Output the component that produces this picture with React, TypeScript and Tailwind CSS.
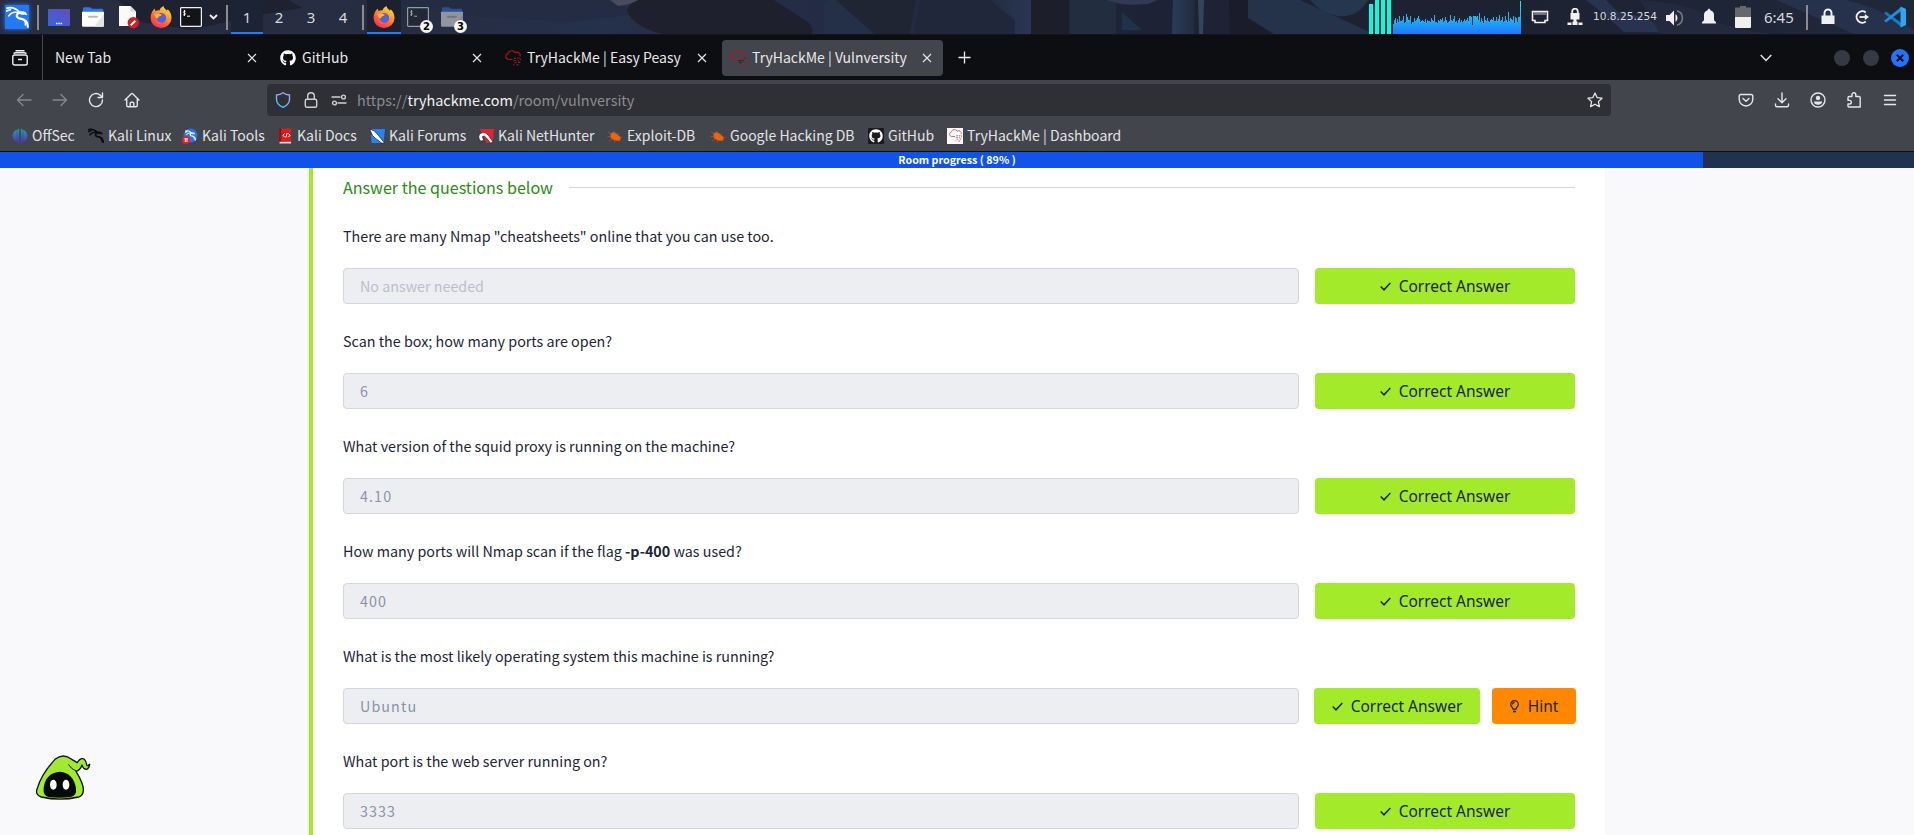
import React from "react";
import { FaGithub } from "react-icons/fa";

const UI = "font-['Noto_Sans_CJK_SC','Noto_Sans',sans-serif]";

function Firefox() {
  return (
    <svg width="22" height="22" viewBox="0 0 22 22">
      <defs>
        <linearGradient id="ff" x1="0.85" y1="0" x2="0.25" y2="1">
          <stop offset="0" stopColor="#ffe34c" />
          <stop offset="0.4" stopColor="#ff9a30" />
          <stop offset="0.7" stopColor="#ff5a35" />
          <stop offset="1" stopColor="#ee2f62" />
        </linearGradient>
      </defs>
      <path d="M2 6Q3 4 4.500 2.500L5.500 5Q8 4 9.300 4.500 10 1.500 13.500 0 13.500 2.500 17 4.800L17.600 3.200Q21.800 7 21.500 12.500A10.400 9.600 0 0 1 .6 12Q.6 8.500 2 6z" fill="url(#ff)" />
      <circle cx="11.200" cy="12" r="4.900" fill="#5560dc" />
      <path d="M4 8Q8 6.600 12 8.800 10.500 10.400 8.600 10.500 8.600 12.600 6.500 12.500z" fill="#ffb63a" />
      <path d="M6.300 12.300Q7.500 17.500 12.500 16.800 10.500 18.600 7.500 17.200 5 15 6.300 12.300z" fill="#ff6a38" />
    </svg>
  );
}

function Dragon({ size, color, x, y, w = 1.9 }: { size: number; color: string; x?: number; y?: number; w?: number }) {
  return (
    <svg x={x} y={y} width={size} height={size} viewBox="0 0 24 24" fill="none" stroke={color} strokeWidth={w} strokeLinecap="round" strokeLinejoin="round">
      <path d="M1 2.200C6 .8 11 3 14.500 6.800M.8 5.200l3.700-1.300M3 10.200C6 6 11 6 14.500 7.500" />
      <path d="M14.500 6.800C9.500 9 10.500 12.800 16 13.400c4.500.6 6.500 3.300 6.800 8.200" strokeWidth={w * 1.200} />
      <path d="M17.500 13.800c2 1.500 3 3.800 2.600 6.200" strokeWidth={w * 0.700} />
      <path d="M14 6.500l3-.8 3.400 1.100 1.200 2.400-2.200-.7-3 .2z" fill={color} strokeWidth={w * 0.500} />
    </svg>
  );
}

function Cloud({ size, color, bits, w = 1.1 }: { size: number; color: string; bits: string; w?: number }) {
  return (
    <svg width={size} height={size} viewBox="0 0 16 16" fill="none">
      <path d="M7.500 9.300H3.300A2.900 2.900 0 0 1 3 3.600 4 4 0 0 1 10.300 2.700 3.200 3.200 0 0 1 15 6.400" stroke={color} strokeWidth={w} />
      <path d="M9 8.300h2M12.200 8.300h1.300M14.700 9.500H16M13 12.300h2.300M8 14.800h1M11.500 14.800h2" stroke={color} strokeWidth="1.200" />
      <path d="M8.300 10.600h3M12.300 10.600h1.500M9.300 12.600h2.300M14.300 8h1.200" stroke={bits} strokeWidth="1.200" />
    </svg>
  );
}

function Terminal({ dim }: { dim?: boolean }) {
  return (
    <svg width="22" height="20" viewBox="0 0 22 20" opacity={dim ? 0.55 : 1}>
      <rect x=".6" y=".6" width="20.800" height="18.800" rx=".8" fill={dim ? "#22242b" : "#131418"} stroke="#f1f1f1" strokeWidth="1.200" />
      <path d="M5.500 4.200c-2-.6-2.400 1.600-1 1.900 1.500.3 1.200 2.200-1.200 1.700M4.400 3v6M7 9.200h3" stroke="#fff" strokeWidth="1" fill="none" />
    </svg>
  );
}

function Folder({ dim }: { dim?: boolean }) {
  return (
    <svg width="22" height="20" viewBox="0 0 22 20" opacity={dim ? 0.5 : 1}>
      <path d="M1 5V1.500A1.300 1.300 0 0 1 2.300.2H8l2 1.500h10.200a1 1 0 0 1 1 1V6H1z" fill="#2f74ea" />
      <path d="M0 4.800h22V18.500a1.300 1.300 0 0 1-1.300 1.300H1.300A1.300 1.300 0 0 1 0 18.500z" fill="#fcfcfc" />
      <path d="M22 7v11.500a1.300 1.300 0 0 1-1.300 1.300H12z" fill="#e4e4e4" />
      <rect x="6" y="8.700" width="10" height="2" rx="1" fill="#b9b9bd" />
    </svg>
  );
}

function Badge({ children }: { children: React.ReactNode }) {
  return (
    <span className="absolute -right-[4px] -bottom-[6px] flex h-[13px] w-[13px] items-center justify-center rounded-full bg-[#f4f4f0] font-['DejaVu_Sans'] text-[10px] leading-none font-bold text-black">
      {children}
    </span>
  );
}

const load = [
  10, 14, 16, 11, 15, 12, 18, 13, 13, 14, 18, 11, 12, 20, 17, 14, 14, 18, 10, 12, 12, 16, 13, 14, 16, 18, 15, 12, 13, 14, 13, 12,
  15, 11, 14, 13, 13, 12, 16, 14, 13, 19, 12, 12, 11, 14, 13, 15, 14, 16, 12, 13, 17, 14, 11, 12, 13, 19, 14, 13, 15, 18, 12, 13,
  11, 14, 16, 12, 14, 12, 13, 15, 13, 14, 16, 13, 18, 18, 17, 9, 18, 18, 18, 17, 18, 14, 21, 12, 16, 13, 11, 18, 14, 13, 16, 13,
  12, 14, 15, 14, 17, 13, 13, 17, 13, 15, 19, 13, 14, 17, 12, 13, 18, 14, 12, 22, 13, 16, 15, 14, 18, 11, 17, 16, 12, 17, 17, 33,
];

function CpuGraph() {
  return (
    <svg width="152" height="34" viewBox="0 0 152 34" className="shrink-0">
      <defs>
        <linearGradient id="cpu" gradientUnits="userSpaceOnUse" x1="0" y1="34" x2="0" y2="0">
          <stop offset="0" stopColor="#2674ff" />
          <stop offset="0.5" stopColor="#13bdf2" />
          <stop offset="1" stopColor="#00ffe0" />
        </linearGradient>
      </defs>
      <path d="M0 4h4v30H0zM6 0h4v34H6zM12 0h4v34h-4zM18 0h4v34h-4z" fill="#00ffe0" />
      {load.map((h, i) => (
        <rect key={i} x={24 + i} y={34 - h} width="1" height={h} fill="url(#cpu)" />
      ))}
    </svg>
  );
}

function Sep() {
  return <i className="h-[25px] w-[2px] shrink-0 bg-[#8b8c90]" />;
}

function Wallpaper() {
  return (
    <svg className="absolute inset-0" width="1914" height="34" viewBox="0 0 1914 34" preserveAspectRatio="none">
      <defs>
        <linearGradient id="wp">
          <stop offset="0" stopColor="#282c3f" />
          <stop offset=".2" stopColor="#262d42" />
          <stop offset=".31" stopColor="#25304a" />
          <stop offset=".5" stopColor="#222a41" />
          <stop offset=".6" stopColor="#1d2335" />
          <stop offset=".75" stopColor="#1d2131" />
          <stop offset="1" stopColor="#1f2839" />
        </linearGradient>
        <linearGradient id="wpa"><stop offset="0" stopColor="#222c40" /><stop offset="1" stopColor="#2a3654" /></linearGradient>
        <linearGradient id="wpb"><stop offset="0" stopColor="#2a3c57" /><stop offset="1" stopColor="#202b3f" /></linearGradient>
      </defs>
      <rect width="1914" height="34" fill="url(#wp)" />
      <path d="M118 0h170l14 8-50 8-60 14-50-8z" fill="#1e2130" />
      <path d="M380 0h240l10 14-60 8-100-6z" fill="#232c42" />
      <path d="M627 10q3-8 12-10h135l34 22q6 6 4 12h-150q-30-8-35-24z" fill="#1e212d" />
      <path d="M610 0h28q-8 5-20 6z" fill="#4a4b5e" />
      <path d="M824 34V6l6-6h30l20 34z" fill="#242f48" />
      <path d="M836 0h80l-6 34h-36z" fill="#202534" />
      <path d="M920 0h70l24 20v14h-100z" fill="#20273a" />
      <path d="M990 0h41v34h-16V20z" fill="url(#wpa)" />
      <path d="M1031 0h38v34h-38z" fill="#1c1e29" />
      <path d="M1070 0h46v34h-46z" fill="#232d40" />
      <path d="M1122 12l20 18h-20z" fill="#1c3348" />
      <path d="M1106 0h52l-10 4q-26 2-34-2z" fill="#303a52" />
      <path d="M1173 0h22l-1 34h-22z" fill="url(#wpb)" />
      <path d="M1198 0h6l-1 34h-4z" fill="#35435c" />
      <path d="M1229 0h19l4 20 20 14h-42z" fill="#1a1d29" />
      <path d="M1248 0h52l74 34h-100l-26-16z" fill="#243349" />
      <path d="M1310 0h58q-10 18-30 16-16-2-28-16z" fill="#25364f" />
      <path d="M1586 0h20l12 12 30 6 16 14h-40l-20-18z" fill="#28334f" />
      <path d="M1640 0q60 4 70 20 30 10 60 14h-110z" fill="#232a3d" />
      <path d="M1776 0h70q40 10 68 30v4h-60z" fill="#26324c" />
    </svg>
  );
}

function Taskbar() {
  const space = "flex h-[34px] w-[32px] items-center justify-center text-[15px]";
  return (
    <div className="relative h-[35px] overflow-hidden bg-[#14161d] font-['Noto_Sans',sans-serif] text-[#d8d9dd]">
      <Wallpaper />
      <div className="relative flex h-[34px] items-center">
        <span className="ml-[5px] flex h-6 w-6 items-center justify-center bg-[#2378f5] shadow-[0_0_5px_#2378f5]">
          <Dragon size={23} color="#fff" />
        </span>
        <div className="mr-[9px] ml-[8px] flex"><Sep /></div>
        <svg width="22" height="17" viewBox="0 0 22 17" className="mt-px">
          <defs><linearGradient id="dk" x1="0" y1="1" x2="1" y2="0"><stop offset="0" stopColor="#3a62dc" /><stop offset=".5" stopColor="#4a5bcd" /><stop offset="1" stopColor="#6b4bb0" /></linearGradient></defs>
          <rect width="22" height="17" rx=".7" fill="url(#dk)" />
          <path d="M8 14.500h1.500M10.300 14.500h1.500M12.600 14.500h1.500" stroke="#fff" strokeWidth="1.500" />
        </svg>
        <span className="ml-[12px]"><Folder /></span>
        <svg className="ml-[14px]" width="22" height="24" viewBox="0 0 22 24">
          <path d="M1 1h11.500L18 6.500V21H1z" fill="#fafafa" /><path d="M12.500 1v5.500H18z" fill="#d6d6d6" />
          <circle cx="15.300" cy="17.800" r="5.700" fill="#cf1f24" /><path d="M12.800 20.200l4.500-4.500" stroke="#fff" strokeWidth="2" />
        </svg>
        <span className="ml-[10px]"><Firefox /></span>
        <span className="ml-[8px]"><Terminal /></span>
        <svg className="ml-[7px]" width="9" height="6" viewBox="0 0 9 6"><path d="M1 1l3.500 3.500L8 1" stroke="#f1f1f1" strokeWidth="1.800" fill="none" /></svg>
        <div className="mr-[3px] ml-[8px] flex"><Sep /></div>
        <div className={space + " border-b-2 border-[#2777ff] bg-[#1c2335] pt-[2px]"}>1</div>
        <div className={space}>2</div>
        <div className={space}>3</div>
        <div className={space}>4</div>
        <div className="mr-[3px] ml-[3px] flex"><Sep /></div>
        <div className="flex h-[34px] w-[34px] items-center justify-center border-b-2 border-[#2777ff] bg-[#1c2130] pt-[2px]"><Firefox /></div>
        <span className="relative ml-[6px] flex"><Terminal dim /><Badge>2</Badge></span>
        <span className="relative ml-[12px] flex"><Folder dim /><Badge>3</Badge></span>
        <div className="ml-auto flex w-[545px] items-center">
          <CpuGraph />
          <svg className="ml-[10px]" width="18" height="16" viewBox="0 0 18 16"><path d="M1.500 2.500h15v9h-2.500v2H4v-2H1.500z" fill="none" stroke="#f0f0ee" strokeWidth="1.600" /><path d="M4 3v3M6 3v3M8 3v3M10 3v3M12 3v3M14 3v3" stroke="#f0f0ee" strokeWidth=".8" /></svg>
          <svg className="ml-[17px]" width="18" height="18" viewBox="0 0 18 18"><path d="M4.500 5h9v6.500h-9zM7.500 11h3v3h-3zM1.500 14.500h4V17h-4zM6.500 13.500h5V17h-5zM12.500 14.500h4V17h-4z" fill="#f0f0ee" /><path d="M6.200 6V3.500a2.800 2.800 0 0 1 5.600 0V6" fill="none" stroke="#f0f0ee" strokeWidth="1.800" /></svg>
          <span className="ml-[9px] w-[66px] -translate-y-px font-['DejaVu_Sans'] text-[10.6px] leading-none whitespace-nowrap">10.8.25.254</span>
          <svg className="ml-[6px] mt-px" width="19" height="18" viewBox="0 0 19 18"><path d="M1 6h3.500L9 1.500v15L4.500 12H1z" fill="#f0f0ee" /><path d="M10.500 5a5 5 0 0 1 0 8z" fill="#f0f0ee" /><path d="M12 1.800a7.500 7.500 0 0 1 0 14.400" fill="none" stroke="#77797f" strokeWidth="1.600" /></svg>
          <svg className="ml-[17px]" width="16" height="18" viewBox="0 0 16 18"><path d="M1 15.500v-1.300l2-2V7a5 5 0 0 1 3.700-4.800c0-2 2.600-2 2.600 0A5 5 0 0 1 13 7v5.200l2 2v1.300z" fill="#f0f0ee" /></svg>
          <svg className="ml-[18px]" width="16" height="22" viewBox="0 0 16 22"><path d="M5 0h6v1.500h5V11H0V1.500h5z" fill="#66686c" /><path d="M0 11h16v10a1 1 0 0 1-1 1H1a1 1 0 0 1-1-1z" fill="#f0f0ee" /></svg>
          <span className="ml-[13px] w-[42px] text-[15px] whitespace-nowrap">6:45</span>
          <Sep />
          <svg className="ml-[13px]" width="14" height="18" viewBox="0 0 14 18"><path d="M.5 7.500h13V16H.5z" fill="#f0f0ee" /><path d="M3.500 8V5a3.500 3.500 0 0 1 7 0v3" fill="none" stroke="#f0f0ee" strokeWidth="2" /></svg>
          <svg className="ml-[19px]" width="16" height="16" viewBox="0 0 16 16"><path d="M11.800 3.500A5.700 5.700 0 1 0 11.800 12.500" fill="none" stroke="#f0f0ee" strokeWidth="2" /><path d="M5.500 8h6" stroke="#f0f0ee" strokeWidth="1.800" /><path d="M10.800 5l4.200 3-4.200 3z" fill="#f0f0ee" /></svg>
          <svg className="ml-[14px]" width="22" height="22" viewBox="0 0 22 22"><path d="M0 7.200L2 5.600 17 16.800v4z" fill="#0b7fc9" /><path d="M0 14.800l2 1.600L17 5.200v-4z" fill="#1c8ede" /><path d="M16.500.6L22 3v16l-5.500 2.500z" fill="#2aa9f2" /></svg>
        </div>
      </div>
    </div>
  );
}

function Close() {
  return <svg width="10" height="10" viewBox="0 0 10 10"><path d="M1 1l8 8M9 1L1 9" stroke="#e3e4e6" strokeWidth="1.200" /></svg>;
}

function Tab({ icon, title, active }: { icon?: React.ReactNode; title: string; active?: boolean }) {
  return (
    <div className={"mr-[4px] flex h-9 w-[221px] items-center rounded-[4px] pl-[8px] pr-[11px] " + (active ? "bg-[#42454c]" : "")}>
      {icon && <span className="mr-[6px] flex w-4">{icon}</span>}
      <span className="flex-1 pb-px text-[14px] leading-5 whitespace-nowrap">{title}</span>
      <Close />
    </div>
  );
}

function TabStrip() {
  return (
    <div className="flex h-[45px] items-center bg-[#0d0e12] text-[#e8e8e8]">
      <div className="flex h-full w-[43px] items-center border-r border-[#45474d] pl-[12px]">
        <svg width="16" height="16" viewBox="0 0 16 16" fill="none" stroke="#f0f0f2" strokeWidth="1.400"><rect x=".8" y="5" width="14.400" height="10" rx="1.800" /><path d="M1.500 3.600Q2.500 2.700 4 2.700h8q1.500 0 2.500.9M3.500 .8h9M6 9.500h4" /></svg>
      </div>
      <div className="ml-[4px] flex">
        <Tab title="New Tab" />
        <Tab title="GitHub" icon={<FaGithub size={16} color="#fff" />} />
        <Tab title="TryHackMe | Easy Peasy" icon={<Cloud size={16} color="#b3171c" bits="#4c2a2e" />} />
        <Tab title="TryHackMe | Vulnversity" active icon={<Cloud size={16} color="#b3171c" bits="#23252c" />} />
      </div>
      <svg className="ml-[11px]" width="13" height="13" viewBox="0 0 13 13"><path d="M6.500.5v12M.5 6.500h12" stroke="#f0f0f0" strokeWidth="1.300" /></svg>
      <div className="ml-auto flex items-center">
        <svg className="mr-[62px]" width="12" height="8" viewBox="0 0 12 8"><path d="M.7 1L6 6.500 11.300 1" stroke="#e8e8ea" strokeWidth="1.400" fill="none" /></svg>
        <i className="mr-[13px] h-4 w-4 rounded-full bg-[#353944]" />
        <i className="mr-[12px] h-4 w-4 rounded-full bg-[#353944]" />
        <svg className="mr-[5px]" width="18" height="18" viewBox="0 0 18 18"><circle cx="9" cy="9" r="9" fill="#2474fb" /><path d="M5.800 5.800l6.400 6.400M12.200 5.800l-6.400 6.400" stroke="#0d1220" strokeWidth="2.200" /></svg>
      </div>
    </div>
  );
}

function Toolbar() {
  const s = { fill: "none", stroke: "#e6e6e8", strokeWidth: 1.4, strokeLinecap: "round", strokeLinejoin: "round" } as const;
  return (
    <div className="flex h-10 items-center">
      <svg className="ml-[16px]" width="16" height="16" viewBox="0 0 16 16" {...s} stroke="#85878b"><path d="M15 8H1.500M7 2.500L1.500 8 7 13.500" /></svg>
      <svg className="ml-[20px]" width="16" height="16" viewBox="0 0 16 16" {...s} stroke="#85878b"><path d="M1 8h13.500M9 2.500L14.500 8 9 13.500" /></svg>
      <svg className="ml-[20px]" width="16" height="16" viewBox="0 0 16 16" {...s}><path d="M14.500 8A6.500 6.500 0 1 1 12.300 3.200L14 5M14.500 1v4.500H10" /></svg>
      <svg className="ml-[20px]" width="16" height="16" viewBox="0 0 16 16" {...s}><path d="M1 8l6.300-6.300q.7-.6 1.400 0L15 8M2.700 7v6.500q0 1.300 1.300 1.300h8q1.300 0 1.300-1.300V7M6.200 14.500v-3.200q0-1.100 1.100-1.100h1.400q1.100 0 1.100 1.100v3.200" /></svg>
      <div className="ml-[127px] flex h-8 w-[1344px] items-center rounded-[4px] bg-[#2f3035]">
        <svg className="ml-[8px]" width="16" height="16" viewBox="0 0 16 16"><defs><linearGradient id="sh" x1="0" y1="1" x2="1" y2="0"><stop offset="0" stopColor="#39c9f5" /><stop offset="1" stopColor="#b09cf5" /></linearGradient></defs><path d="M8 .8C6 2.300 3.800 3 1.500 3v4.500c0 3.500 3.200 6.300 6.500 7.800 3.300-1.500 6.500-4.300 6.500-7.800V3C12.200 3 10 2.300 8 .8z" fill="none" stroke="url(#sh)" strokeWidth="1.400" /></svg>
        <svg className="ml-[12px]" width="16" height="16" viewBox="0 0 16 16" {...s} stroke="#cfd0d2"><rect x="2.300" y="7.300" width="11.400" height="8" rx="1.500" /><path d="M4.700 7V4a3.300 3.300 0 0 1 6.600 0v3" /></svg>
        <svg className="ml-[12px]" width="16" height="16" viewBox="0 0 16 16" {...s} stroke="#cfd0d2"><path d="M1 5h8M7 11h8" /><circle cx="12.500" cy="5" r="1.900" /><circle cx="3.500" cy="11" r="1.900" /></svg>
        <span className="ml-[10px] flex-1 text-[14.43px] leading-5 whitespace-nowrap text-[#8b8c90]">
          https://<b className="font-normal text-[#f0f0f0]">tryhackme.com</b>/room/vulnversity
        </span>
        <svg className="mr-[8px]" width="16" height="16" viewBox="0 0 16 16" {...s} strokeWidth="1.300"><path d="M8 1l2.100 4.600 4.900.6-3.600 3.400 1 5L8 12.200l-4.400 2.400 1-5L1 6.200l4.900-.6z" /></svg>
      </div>
      <svg className="ml-[127px]" width="16" height="16" viewBox="0 0 16 16" {...s}><path d="M3 2.500h10q1.800 0 1.800 1.800v3A6.800 6.800 0 0 1 8 14 6.800 6.800 0 0 1 1.200 7.300v-3Q1.200 2.500 3 2.500zM5 6.500l3 2.800 3-2.800" /></svg>
      <svg className="ml-[20px]" width="16" height="16" viewBox="0 0 16 16" {...s}><path d="M8 1v9.500M4 6.800l4 4 4-4M1.500 12v1.300q0 1.500 1.500 1.500h10q1.500 0 1.500-1.500V12" /></svg>
      <svg className="ml-[20px]" width="16" height="16" viewBox="0 0 16 16" {...s}><circle cx="8" cy="8" r="7" /><circle cx="8" cy="5.900" r="2.200" fill="#e6e6e8" stroke="none" /><path d="M3.800 9.500h8.400q-.5 3.300-4.200 3.300t-4.200-3.300z" fill="#e6e6e8" stroke="none" /></svg>
      <svg className="ml-[20px]" width="16" height="16" viewBox="0 0 16 16" {...s}><path d="M6 4.500V2.700a1.900 1.900 0 0 1 3.800 0v1.800H13q1.200 0 1.200 1.200V15H3q-1 0-1-1v-2h1.500a1.800 1.800 0 0 0 0-3.600H2V5.700q0-1.200 1.200-1.200z" /></svg>
      <svg className="ml-[20px]" width="16" height="16" viewBox="0 0 16 16" {...s}><path d="M2.500 3.500h11M2.500 8h11M2.500 12.500h11" /></svg>
    </div>
  );
}

function Bug() {
  return (
    <svg width="16" height="16" viewBox="0 0 16 16">
      <path d="M3.500 5.500Q7 3 10 6L14 9.500l-1 3Q7 13.500 3.500 9.500z" fill="#f0640f" />
      <path d="M1 3.800l4 2.500M.5 8.500h4M2 13l3.500-2.500M7 3l1 3M12 5l-2 2M7.500 14.500l.5-3M13 13.500l-2-2M15.500 9l-3 1" stroke="#a8562a" strokeWidth=".8" />
    </svg>
  );
}

const bookmarks: { label: string; w: string; icon: React.ReactNode }[] = [
  { label: "OffSec", w: "w-[76px]", icon: <svg width="16" height="16" viewBox="0 0 16 16"><defs><linearGradient id="os" x1="0" y1="0" x2="0" y2="1"><stop offset="0" stopColor="#1ba7b2" /><stop offset="1" stopColor="#5b25c4" /></linearGradient></defs><path d="M6.800.8v14.400L5.500 13V2zM4.600 2v11.800A7 7 0 0 1 .7 8 7 7 0 0 1 4.600 2zM9.200.8v14.400l1.300-2.200V2zM11.400 2v11.800A7 7 0 0 0 15.300 8a7 7 0 0 0-3.900-6z" fill="url(#os)" stroke="url(#os)" strokeWidth=".5" /></svg> },
  { label: "Kali Linux", w: "w-[94px]", icon: <Dragon size={16} color="#0c0c0e" w={2.2} /> },
  { label: "Kali Tools", w: "w-[95px]", icon: <svg width="16" height="16" viewBox="0 0 16 16"><circle cx="8.500" cy="7.500" r="7" fill="#2474e8" /><Dragon x={3} y={2} size={11} color="#e9f1ff" w={2.2} /><circle cx="4" cy="12" r="4" fill="#e0242c" /><path d="M2.300 10.800h3.600M3.300 10.800V14M5 10.800V14" stroke="#fff" strokeWidth=".9" /></svg> },
  { label: "Kali Docs", w: "w-[92px]", icon: <svg width="16" height="16" viewBox="0 0 16 16"><path d="M2 .5h12V14H2z" fill="#d81e1e" /><path d="M2 .5h2.300V15H2z" fill="#8f1214" /><path d="M2.500 13.800H14v1.700H2.500z" fill="#e6e0e0" /><path d="M7.500 5.500L6 7.300l1.500 1.800M11.500 5.500L13 7.300l-1.500 1.800M10.300 5L8.700 9.500" stroke="#fff" strokeWidth="1" fill="none" /></svg> },
  { label: "Kali Forums", w: "w-[109px]", icon: <svg width="16" height="16" viewBox="0 0 16 16"><path d="M2 1h14l-1.500 14H2.500z" fill="#2583f4" /><path d="M.5 1l5 2 4 4.500 6 7.500-2.500.3L6 10 3.500 7.500z" fill="#fff" stroke="#1a1a1e" strokeWidth=".7" /></svg> },
  { label: "Kali NetHunter", w: "w-[129px]", icon: <svg width="16" height="16" viewBox="0 0 16 16"><path d="M2 1h14l-1.500 13.500-6 .5z" fill="#e4252f" /><path d="M2.500 13Q-1 8.500 2.500 5.500 7 3 10.500 7.500l4.500 6.500-2.500 1-4-5Q6 6.800 4.500 8.500 4.500 10.500 6 12.500z" fill="#fff" stroke="#1a1a1e" strokeWidth=".6" /></svg> },
  { label: "Exploit-DB", w: "w-[103px]", icon: <Bug /> },
  { label: "Google Hacking DB", w: "w-[158px]", icon: <Bug /> },
  { label: "GitHub", w: "w-[79px]", icon: <span className="flex h-4 w-4 items-center justify-center bg-[#1b1a1c]"><FaGithub size={14} color="#fff" /></span> },
  { label: "TryHackMe | Dashboard", w: "w-[180px]", icon: <span className="flex h-4 w-4 items-center justify-center bg-white"><Cloud size={13} color="#d65050" bits="#8d8d94" /></span> },
];

function Bookmarks() {
  return (
    <div className="flex h-[31px] items-center pl-[12px] text-[14px] leading-5 text-[#e2e3e4]">
      {bookmarks.map((b) => (
        <div key={b.label} className={"flex items-center whitespace-nowrap " + b.w}>
          <span className="mr-[4px] flex w-4 shrink-0">{b.icon}</span>
          <span className="pb-[2px]">{b.label}</span>
        </div>
      ))}
    </div>
  );
}

const questions: { q: React.ReactNode; a?: string; hint?: boolean }[] = [
  { q: 'There are many Nmap "cheatsheets" online that you can use too.' },
  { q: "Scan the box; how many ports are open?", a: "6" },
  { q: "What version of the squid proxy is running on the machine?", a: "4.10" },
  { q: <>How many ports will Nmap scan if the flag <b>-p-400</b> was used?</>, a: "400" },
  { q: "What is the most likely operating system this machine is running?", a: "Ubuntu", hint: true },
  { q: "What port is the web server running on?", a: "3333" },
];

function Correct({ hint }: { hint?: boolean }) {
  return (
    <div className={"flex h-9 items-center justify-center rounded-[4px] bg-[#a3ea2a] " + (hint ? "w-[166px]" : "w-[260px]")}>
      <svg className="mr-[8px]" width="11" height="9" viewBox="0 0 11 9"><path d="M.7 4.500l3.300 3.300L10.300 1" fill="none" stroke="#1c2538" strokeWidth="1.500" /></svg>
      <span>Correct Answer</span>
    </div>
  );
}

function Row({ q, a, hint }: { q: React.ReactNode; a?: string; hint?: boolean }) {
  return (
    <div className="h-[105px]">
      <p className="h-[69px] pt-[27px] text-[14.32px] leading-5 text-[#1c2538]">{q}</p>
      <div className={"flex h-9 " + (hint ? "gap-[15px]" : "gap-[16px]")}>
        <div className="flex w-[956px] shrink-0 items-center rounded-[4px] border border-[#d3d6de] bg-[#edeef2] px-4 leading-5">
          {a ? <span className="text-[14.3px] tracking-[1.1px] text-[#8a92a6]">{a}</span> : <span className="text-[14.3px] text-[#bbbfcb]">No answer needed</span>}
        </div>
        <div className="flex shrink-0 gap-[12px] font-['Noto_Sans',sans-serif] text-[15.5px] leading-5 text-[#1c2538]">
          <Correct hint={hint} />
          {hint && (
            <div className="flex h-9 w-[84px] items-center justify-center rounded-[4px] bg-[#ff8800]">
              <svg className="mr-[9px]" width="9" height="13" viewBox="0 0 9 13" fill="none" stroke="#1c2538" strokeWidth="1.200"><path d="M3 9.200C3 7.500.7 6.700.7 4.400a3.800 3.800 0 0 1 7.600 0C8.300 6.700 6 7.500 6 9.200zM2.500 4.400a2 2 0 0 1 2-2" /><path d="M3 10.800h3v1.500H3z" fill="#1c2538" stroke="none" /></svg>
              <span>Hint</span>
            </div>
          )}
        </div>
      </div>
    </div>
  );
}

function Mascot() {
  return (
    <svg className="absolute bottom-[31px] left-[34px]" width="58" height="50" viewBox="102 102 174 150">
      <path d="M112 205C120 175 145 140 165 118Q190 98 215 118L232 128Q240 114 249 116Q256 117 260 134Q262 140 269 133Q267 146 259 148Q250 148 246 135Q240 152 228 154Q250 190 250 208Q251 226 236 231Q180 244 124 231Q104 224 112 205z" fill="#a2ea2c" stroke="#0c1208" strokeWidth="4" strokeLinejoin="round" />
      <path d="M205 133Q214 148 229 153" fill="none" stroke="#0c1208" strokeWidth="3" />
      <path d="M131 205Q136 158 180 155Q220 158 228 205Q231 228 212 231Q178 236 146 231Q128 227 131 205z" fill="#060a08" />
      <ellipse cx="160" cy="194" rx="10" ry="15" fill="#fff" />
      <ellipse cx="198" cy="194" rx="10" ry="15" fill="#fff" />
    </svg>
  );
}

export default function App() {
  return (
    <div className={"relative flex h-[835px] w-[1914px] flex-col overflow-hidden " + UI}>
      <Taskbar />
      <TabStrip />
      <div className="h-[72px] border-b border-[#0d0e12] bg-[#42454c]">
        <Toolbar />
        <Bookmarks />
      </div>
      <div className="relative h-4 shrink-0 bg-[#213250]">
        <div className="h-4 w-[89%] bg-[#1153e8]" />
        <span className="absolute inset-0 text-center text-[10.7px] leading-4 font-bold text-white">Room progress ( 89% )</span>
      </div>
      <div className="flex flex-1 overflow-hidden bg-[#f9f9fb] pl-[309px]">
        <main className="h-[667px] w-[1296px] border-l-4 border-[#a3ea2a] bg-white pr-[30px] pl-[30px]">
          <div className="flex h-[31px] items-center gap-4 pt-[8px]">
            <h2 className="pb-[2px] text-[16.08px] leading-6 text-[#2a8c12]">Answer the questions below</h2>
            <i className="h-px flex-1 bg-[#d3d6de]" />
          </div>
          {questions.map((r, i) => <Row key={i} {...r} />)}
        </main>
      </div>
      <Mascot />
    </div>
  );
}
